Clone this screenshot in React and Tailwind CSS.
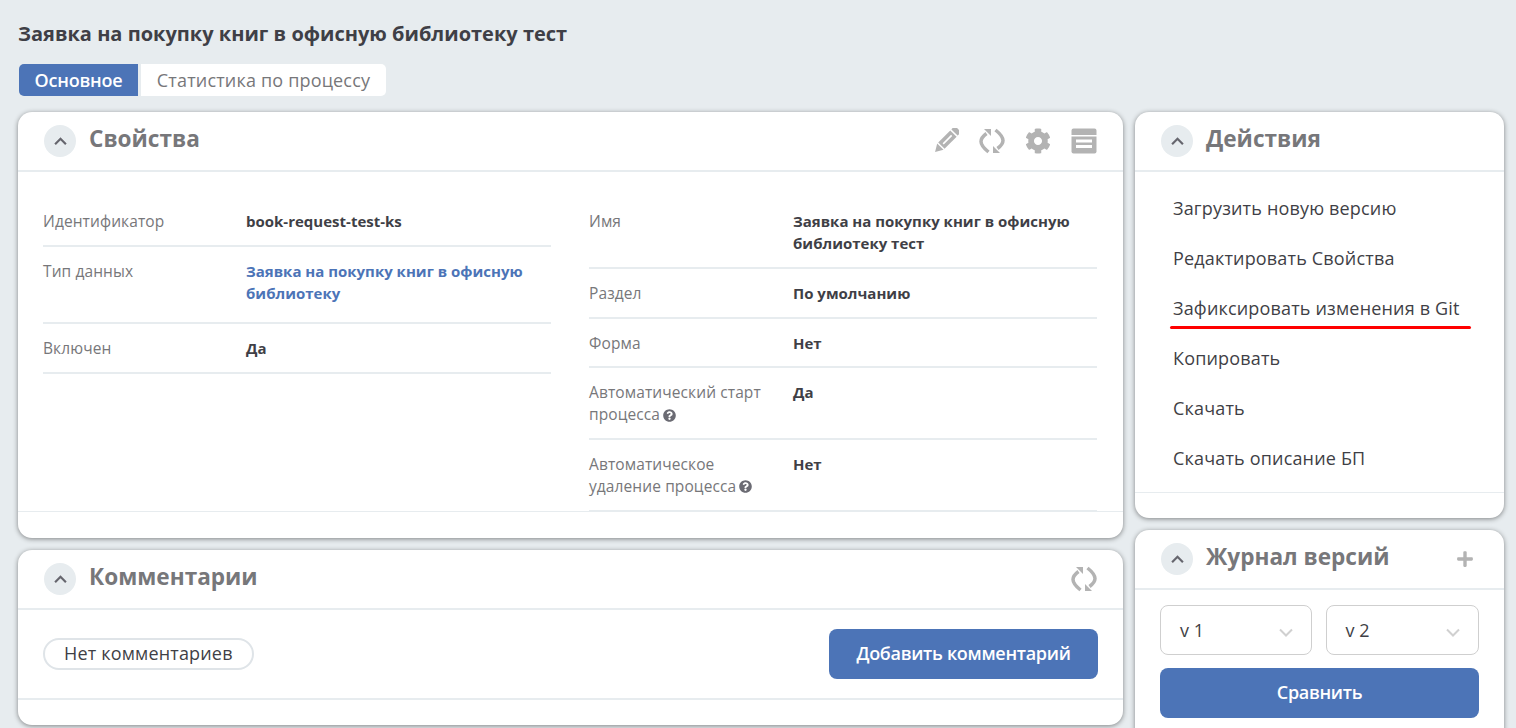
import { FaCog, FaPlus, FaQuestionCircle } from 'react-icons/fa';

const SyncIcon = ({ className }) => (
  <svg viewBox="0 0 26 26" className={className} fill="none">
    <path d="M7.500 5.500C3.500 8.500 2 11 2 13.500C2 16.500 4.500 20 9.500 24" stroke="currentColor" strokeWidth="3.500" />
    <path d="M16.500 2C21.500 6 24 9.500 24 12.500C24 15 22.500 17.500 18.500 20.500" stroke="currentColor" strokeWidth="3.500" />
    <path d="M5 1h7v7z" fill="currentColor" />
    <path d="M21 25h-7v-7z" fill="currentColor" />
  </svg>
);

const PencilIcon = ({ className }) => (
  <svg viewBox="0 0 26 26" className={className}>
    <g transform="rotate(45 13 13)">
      <rect x="8.500" y="-4" width="9" height="5" rx="0.500" fill="currentColor" />
      <rect x="8.500" y="2.500" width="9" height="17" fill="currentColor" />
      <rect x="12.200" y="5" width="1.600" height="12" fill="#fff" />
      <path d="M8.500 21h9l-4.500 7.500z" fill="currentColor" />
    </g>
  </svg>
);

const ArchiveIcon = ({ className }) => (
  <svg viewBox="0 0 26 26" className={className}>
    <path d="M2.500 0.500h21a2 2 0 0 1 2 2v4.500h-25v-4.500a2 2 0 0 1 2-2z" fill="currentColor" />
    <path d="M0.500 8.500h25v15a2 2 0 0 1-2 2h-21a2 2 0 0 1-2-2z" fill="currentColor" />
    <path d="M5 11.500h16v3h-16zM5 17h16v3h-16z" fill="#fff" />
  </svg>
);

const Collapse = () => (
  <div className="w-8 h-8 rounded-full bg-[#e7ecef] flex items-center justify-center shrink-0">
    <svg viewBox="0 0 12 8" className="w-[13px] h-[9px] text-[#66666e]" fill="none">
      <path d="M1 6.500l5-5 5 5" stroke="currentColor" strokeWidth="2" />
    </svg>
  </div>
);

const CardHeader = ({ title, children }) => (
  <div className="h-[60px] border-b-2 border-[#e7ecef] pl-[26px] pr-[26px] flex items-center gap-[13px]">
    <Collapse />
    <h2 className="text-[22.6px] font-bold text-[#77777a] -mt-[3px] leading-none">{title}</h2>
    <div className="ml-auto flex items-center gap-5 text-[#b3b3b3]">{children}</div>
  </div>
);

const Row = ({ label, hint, value, link, wide }) => (
  <div className="flex border-b-2 border-[#e7ecef] pt-[13px] pb-[12.75px] text-[15px] leading-[22px]">
    <div className={`${wide ? 'w-[204px]' : 'w-[203px]'} shrink-0 pr-4 text-[15.5px] tracking-[0.1px] text-[#77777a]`}>
      {label}
      {hint && <FaQuestionCircle className="inline-block w-[13px] h-[13px] ml-[3px] -mt-[2px] text-[#6b6b73]" />}
    </div>
    {link ? (
      <div className="flex-1 font-bold text-[#4c74b7] pb-[5.5px]">{value}</div>
    ) : (
      <div className="flex-1 font-bold text-[#3f3f46]">{value}</div>
    )}
  </div>
);

const actions = [
  'Загрузить новую версию',
  'Редактировать Свойства',
  'Зафиксировать изменения в Git',
  'Копировать',
  'Скачать',
  'Скачать описание БП',
];

const App = () => {
  return (
    <div className="h-[728px] overflow-hidden bg-[#e7ecef] pl-[18px] pr-[12px] pt-[22px] font-['Open_Sans','Noto_Sans',sans-serif]">
      <h1 className="text-[20px] leading-[24px] font-bold text-[#3f3f46]">Заявка на покупку книг в офисную библиотеку тест</h1>

      <div className="flex mt-[18px] ml-px text-[18px] leading-[32px] h-[32px]">
        <div className="w-[119px] text-center bg-[#4c74b7] text-white font-semibold tracking-[-0.2px] rounded-l-[5px]">Основное</div>
        <div className="w-[245px] text-center bg-white text-[#77777a] tracking-[0.17px] ml-[3px] rounded-r-[5px]">Статистика по процессу</div>
      </div>

      <div className="flex gap-3 mt-4 items-start">
        <div className="w-[1105px] shrink-0 flex flex-col gap-3">
          {/* Properties */}
          <div className="bg-white rounded-[14px] shadow-[0_1px_5px_rgba(0,0,0,0.45)] h-[426px] overflow-hidden flex flex-col">
            <CardHeader title="Свойства">
              <PencilIcon className="w-[26px] h-[26px]" />
              <SyncIcon className="w-[26px] h-[26px]" />
              <FaCog className="w-[26px] h-[26px]" />
              <ArchiveIcon className="w-[26px] h-[26px]" />
            </CardHeader>
            <div className="h-[340px] border-b border-[#e7ecef] px-[25px] pt-[25px] grid grid-cols-[508px_508px] gap-[38px] overflow-hidden">
              <div>
                <Row label="Идентификатор" value="book-request-test-ks" />
                <Row label="Тип данных" value="Заявка на покупку книг в офисную библиотеку" link />
                <Row label="Включен" value="Да" />
              </div>
              <div>
                <Row wide label="Имя" value="Заявка на покупку книг в офисную библиотеку тест" />
                <Row wide label="Раздел" value="По умолчанию" />
                <Row wide label="Форма" value="Нет" />
                <Row wide label="Автоматический старт процесса" hint value="Да" />
                <Row wide label="Автоматическое удаление процесса" hint value="Нет" />
              </div>
            </div>
          </div>

          {/* Comments */}
          <div className="bg-white rounded-[14px] shadow-[0_1px_5px_rgba(0,0,0,0.45)] h-[175px]">
            <CardHeader title="Комментарии">
              <SyncIcon className="w-[26px] h-[26px]" />
            </CardHeader>
            <div className="h-[90px] border-b-2 border-[#e7ecef] pl-[25px] pr-[25px] flex items-center justify-between">
              <div className="h-8 px-[19px] rounded-full border-2 border-[#dfe4e8] text-[18px] tracking-[0.17px] leading-[27px] text-[#3f3f46]">Нет комментариев</div>
              <button className="w-[269px] h-[50px] rounded-[8px] bg-[#4c74b7] text-white text-[18px] font-semibold tracking-[-0.3px] pb-[2px]">Добавить комментарий</button>
            </div>
          </div>
        </div>

        <div className="w-[369px] shrink-0 flex flex-col gap-3">
          {/* Actions */}
          <div className="bg-white rounded-[14px] shadow-[0_1px_5px_rgba(0,0,0,0.45)] h-[406px]">
            <CardHeader title="Действия" />
            <div className="h-[321px] border-b border-[#e7ecef] pl-[38px] pt-[11px]">
              {actions.map((a, i) => (
                <div key={a} className="relative h-[50px] leading-[50px] text-[18px] tracking-[0.17px] text-[#3f3f46]">
                  {a}
                  {i === 2 && <div className="absolute left-[-3px] top-[43px] w-[301px] h-[3px] rounded-full bg-[#ff0000]" />}
                </div>
              ))}
            </div>
          </div>

          {/* Version log */}
          <div className="bg-white rounded-[14px] shadow-[0_1px_5px_rgba(0,0,0,0.45)] h-[300px]">
            <CardHeader title="Журнал версий">
              <FaPlus className="w-[18px] h-[18px] mr-[4px]" />
            </CardHeader>
            <div className="pl-[25px] pr-[25px] pt-[15px]">
              <div className="flex gap-[14px]">
                <div className="w-[152px] shrink-0 h-[50px] rounded-[8px] border border-[#cfcfcf] pl-[19px] pr-[18px] flex items-center justify-between text-[18px] text-[#3f3f46]">
                  v 1
                  <svg viewBox="0 0 14 9" className="w-[14px] h-[9px] mt-1 text-[#d0d0d0]" fill="none">
                    <path d="M1 1.500l6 6 6-6" stroke="currentColor" strokeWidth="2" />
                  </svg>
                </div>
                <div className="flex-1 h-[50px] rounded-[8px] border border-[#cfcfcf] pl-[18.5px] pr-[18px] flex items-center justify-between text-[18px] text-[#3f3f46]">
                  v 2
                  <svg viewBox="0 0 14 9" className="w-[14px] h-[9px] mt-1 text-[#d0d0d0]" fill="none">
                    <path d="M1 1.500l6 6 6-6" stroke="currentColor" strokeWidth="2" />
                  </svg>
                </div>
              </div>
              <button className="w-full h-[50px] mt-[13px] rounded-[8px] bg-[#4c74b7] text-white text-[18px] font-semibold tracking-[-0.3px] pb-[2px]">Сравнить</button>
            </div>
          </div>
        </div>
      </div>
    </div>
  );
};

export default App;
